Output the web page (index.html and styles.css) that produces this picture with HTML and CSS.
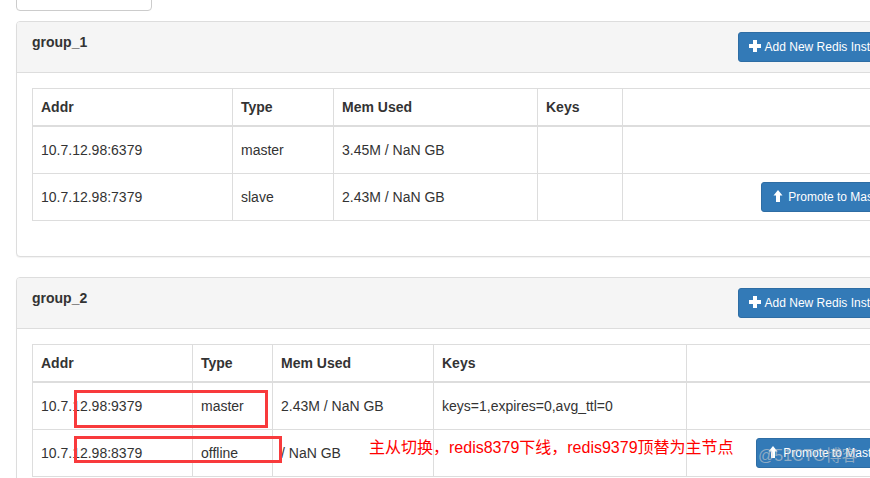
FILE: index.html
```html
<!DOCTYPE html>
<html lang="en">
<head>
    <meta charset="UTF-8">
    <title>Redis Groups</title>
    <link rel="stylesheet" href="styles.css">
</head>
<body>

<div class="page">
    <div class="toolbar-box"></div>

    <div class="panel">
        <div class="panel-heading">
            <h3 class="panel-title">group_1</h3>
            <button class="btn">
                <svg class="icon" viewBox="0 0 12 12"><rect x="4" y="0" width="4" height="12"/><rect x="0" y="4" width="12" height="4"/></svg>Add New Redis Instance
            </button>
        </div>
        <div class="panel-body">
            <table class="table">
                <colgroup>
                    <col class="g1-addr"><col class="g1-type"><col class="g1-mem"><col class="g1-keys"><col>
                </colgroup>
                <thead>
                    <tr><th>Addr</th><th>Type</th><th>Mem Used</th><th>Keys</th><th></th></tr>
                </thead>
                <tbody>
                    <tr><td>10.7.12.98:6379</td><td>master</td><td>3.45M / NaN GB</td><td></td><td></td></tr>
                    <tr>
                        <td>10.7.12.98:7379</td><td>slave</td><td>2.43M / NaN GB</td><td></td>
                        <td class="actions">
                            <button class="btn">
                                <svg class="icon" viewBox="0 0 12 12"><polygon points="6,0 10.5,5.5 8,5.5 8,12 4,12 4,5.5 1.5,5.5"/></svg>Promote to Master
                            </button>
                        </td>
                    </tr>
                </tbody>
            </table>
        </div>
    </div>

    <div class="panel">
        <div class="panel-heading">
            <h3 class="panel-title">group_2</h3>
            <button class="btn">
                <svg class="icon" viewBox="0 0 12 12"><rect x="4" y="0" width="4" height="12"/><rect x="0" y="4" width="12" height="4"/></svg>Add New Redis Instance
            </button>
        </div>
        <div class="panel-body">
            <table class="table">
                <colgroup>
                    <col class="g2-addr"><col class="g2-type"><col class="g2-mem"><col class="g2-keys"><col>
                </colgroup>
                <thead>
                    <tr><th>Addr</th><th>Type</th><th>Mem Used</th><th>Keys</th><th></th></tr>
                </thead>
                <tbody>
                    <tr><td>10.7.12.98:9379</td><td>master</td><td>2.43M / NaN GB</td><td>keys=1,expires=0,avg_ttl=0</td><td></td></tr>
                    <tr>
                        <td>10.7.12.98:8379</td><td>offline</td><td>/ NaN GB</td><td></td>
                        <td class="actions actions-offline">
                            <button class="btn">
                                <svg class="icon" viewBox="0 0 12 12"><polygon points="6,0 10.5,5.5 8,5.5 8,12 4,12 4,5.5 1.5,5.5"/></svg>Promote to Master
                            </button>
                        </td>
                    </tr>
                </tbody>
            </table>
        </div>
    </div>

    <!-- annotations drawn over the screenshot -->
    <div class="mark mark-master"></div>
    <div class="mark mark-offline"></div>
    <div class="note">主从切换，redis8379下线，redis9379顶替为主节点</div>
    <div class="watermark">@51CTO博客</div>
</div>

</body>
</html>
```

FILE: styles.css
```css
html, body {
    overflow: hidden;
}
body {
    margin: 0;
    font-family: 'Liberation Sans', Helvetica, Arial, 'Noto Sans CJK SC', sans-serif;
    font-size: 14px;
    line-height: 20px;
    color: #333;
    background: #fff;
}
.page {
    display: flow-root;
    position: relative;
    padding-left: 16px;
}
.toolbar-box {
    box-sizing: border-box;
    width: 136px;
    height: 35px;
    margin-top: -24px;
    margin-bottom: 10px;
    border: 1px solid #ccc;
    border-radius: 4px;
}
.panel {
    box-sizing: border-box;
    width: 907px;
    margin-bottom: 20px;
    border: 1px solid #ddd;
    border-radius: 4px;
    background: #fff;
    box-shadow: 0 1px 1px rgba(0, 0, 0, 0.05);
}
.panel-heading {
    display: flex;
    justify-content: space-between;
    align-items: flex-start;
    padding: 10px 15px;
    background: #f5f5f5;
    border-bottom: 1px solid #ddd;
    border-radius: 3px 3px 0 0;
}
.panel-title {
    margin: 0;
    font-size: 14px;
    line-height: 20px;
    font-weight: bold;
}
.panel-body {
    padding: 15px;
}
.btn {
    display: inline-block;
    height: 30px;
    padding: 5px 10px;
    box-sizing: border-box;
    font-family: inherit;
    font-size: 12px;
    line-height: 18px;
    color: #fff;
    background: #337ab7;
    border: 1px solid #2e6da4;
    border-radius: 3px;
    white-space: nowrap;
    vertical-align: top;
    cursor: pointer;
}
.icon {
    width: 12px;
    height: 12px;
    margin-right: 4px;
    fill: #fff;
    vertical-align: -1px;
}
.table {
    width: 100%;
    margin-bottom: 20px;
    border-collapse: collapse;
    table-layout: fixed;
    border: 1px solid #ddd;
}
.table th, .table td {
    border: 1px solid #ddd;
    padding: 8px;
    text-align: left;
    white-space: nowrap;
    overflow: hidden;
}
.table th {
    line-height: 20px;
    border-bottom-width: 2px;
}
.table td {
    line-height: 30px;
    vertical-align: middle;
}
.table td.actions {
    text-align: right;
    overflow: visible;
}
.table td.actions-offline {
    padding-right: 13px;
}
.g1-addr { width: 200px; }
.g1-type { width: 101px; }
.g1-mem { width: 204px; }
.g1-keys { width: 85px; }
.g2-addr { width: 160px; }
.g2-type { width: 80px; }
.g2-mem { width: 161px; }
.g2-keys { width: 253px; }
.mark {
    position: absolute;
    box-sizing: border-box;
    border: 3px solid #f83a3c;
}
.mark-master {
    left: 74px;
    top: 390px;
    width: 194px;
    height: 38px;
}
.mark-offline {
    left: 74px;
    top: 436px;
    width: 208px;
    height: 27px;
}
.note {
    position: absolute;
    left: 369px;
    top: 437px;
    font-family: 'Liberation Sans', 'Noto Sans CJK SC', sans-serif;
    font-size: 16px;
    line-height: 22px;
    color: #ff0000;
    white-space: nowrap;
}
.watermark {
    position: absolute;
    left: 758px;
    top: 445px;
    font-family: 'Liberation Sans', 'Noto Sans CJK SC', sans-serif;
    font-size: 16px;
    line-height: 22px;
    color: rgba(205, 205, 205, 0.6);
    white-space: nowrap;
}
```
